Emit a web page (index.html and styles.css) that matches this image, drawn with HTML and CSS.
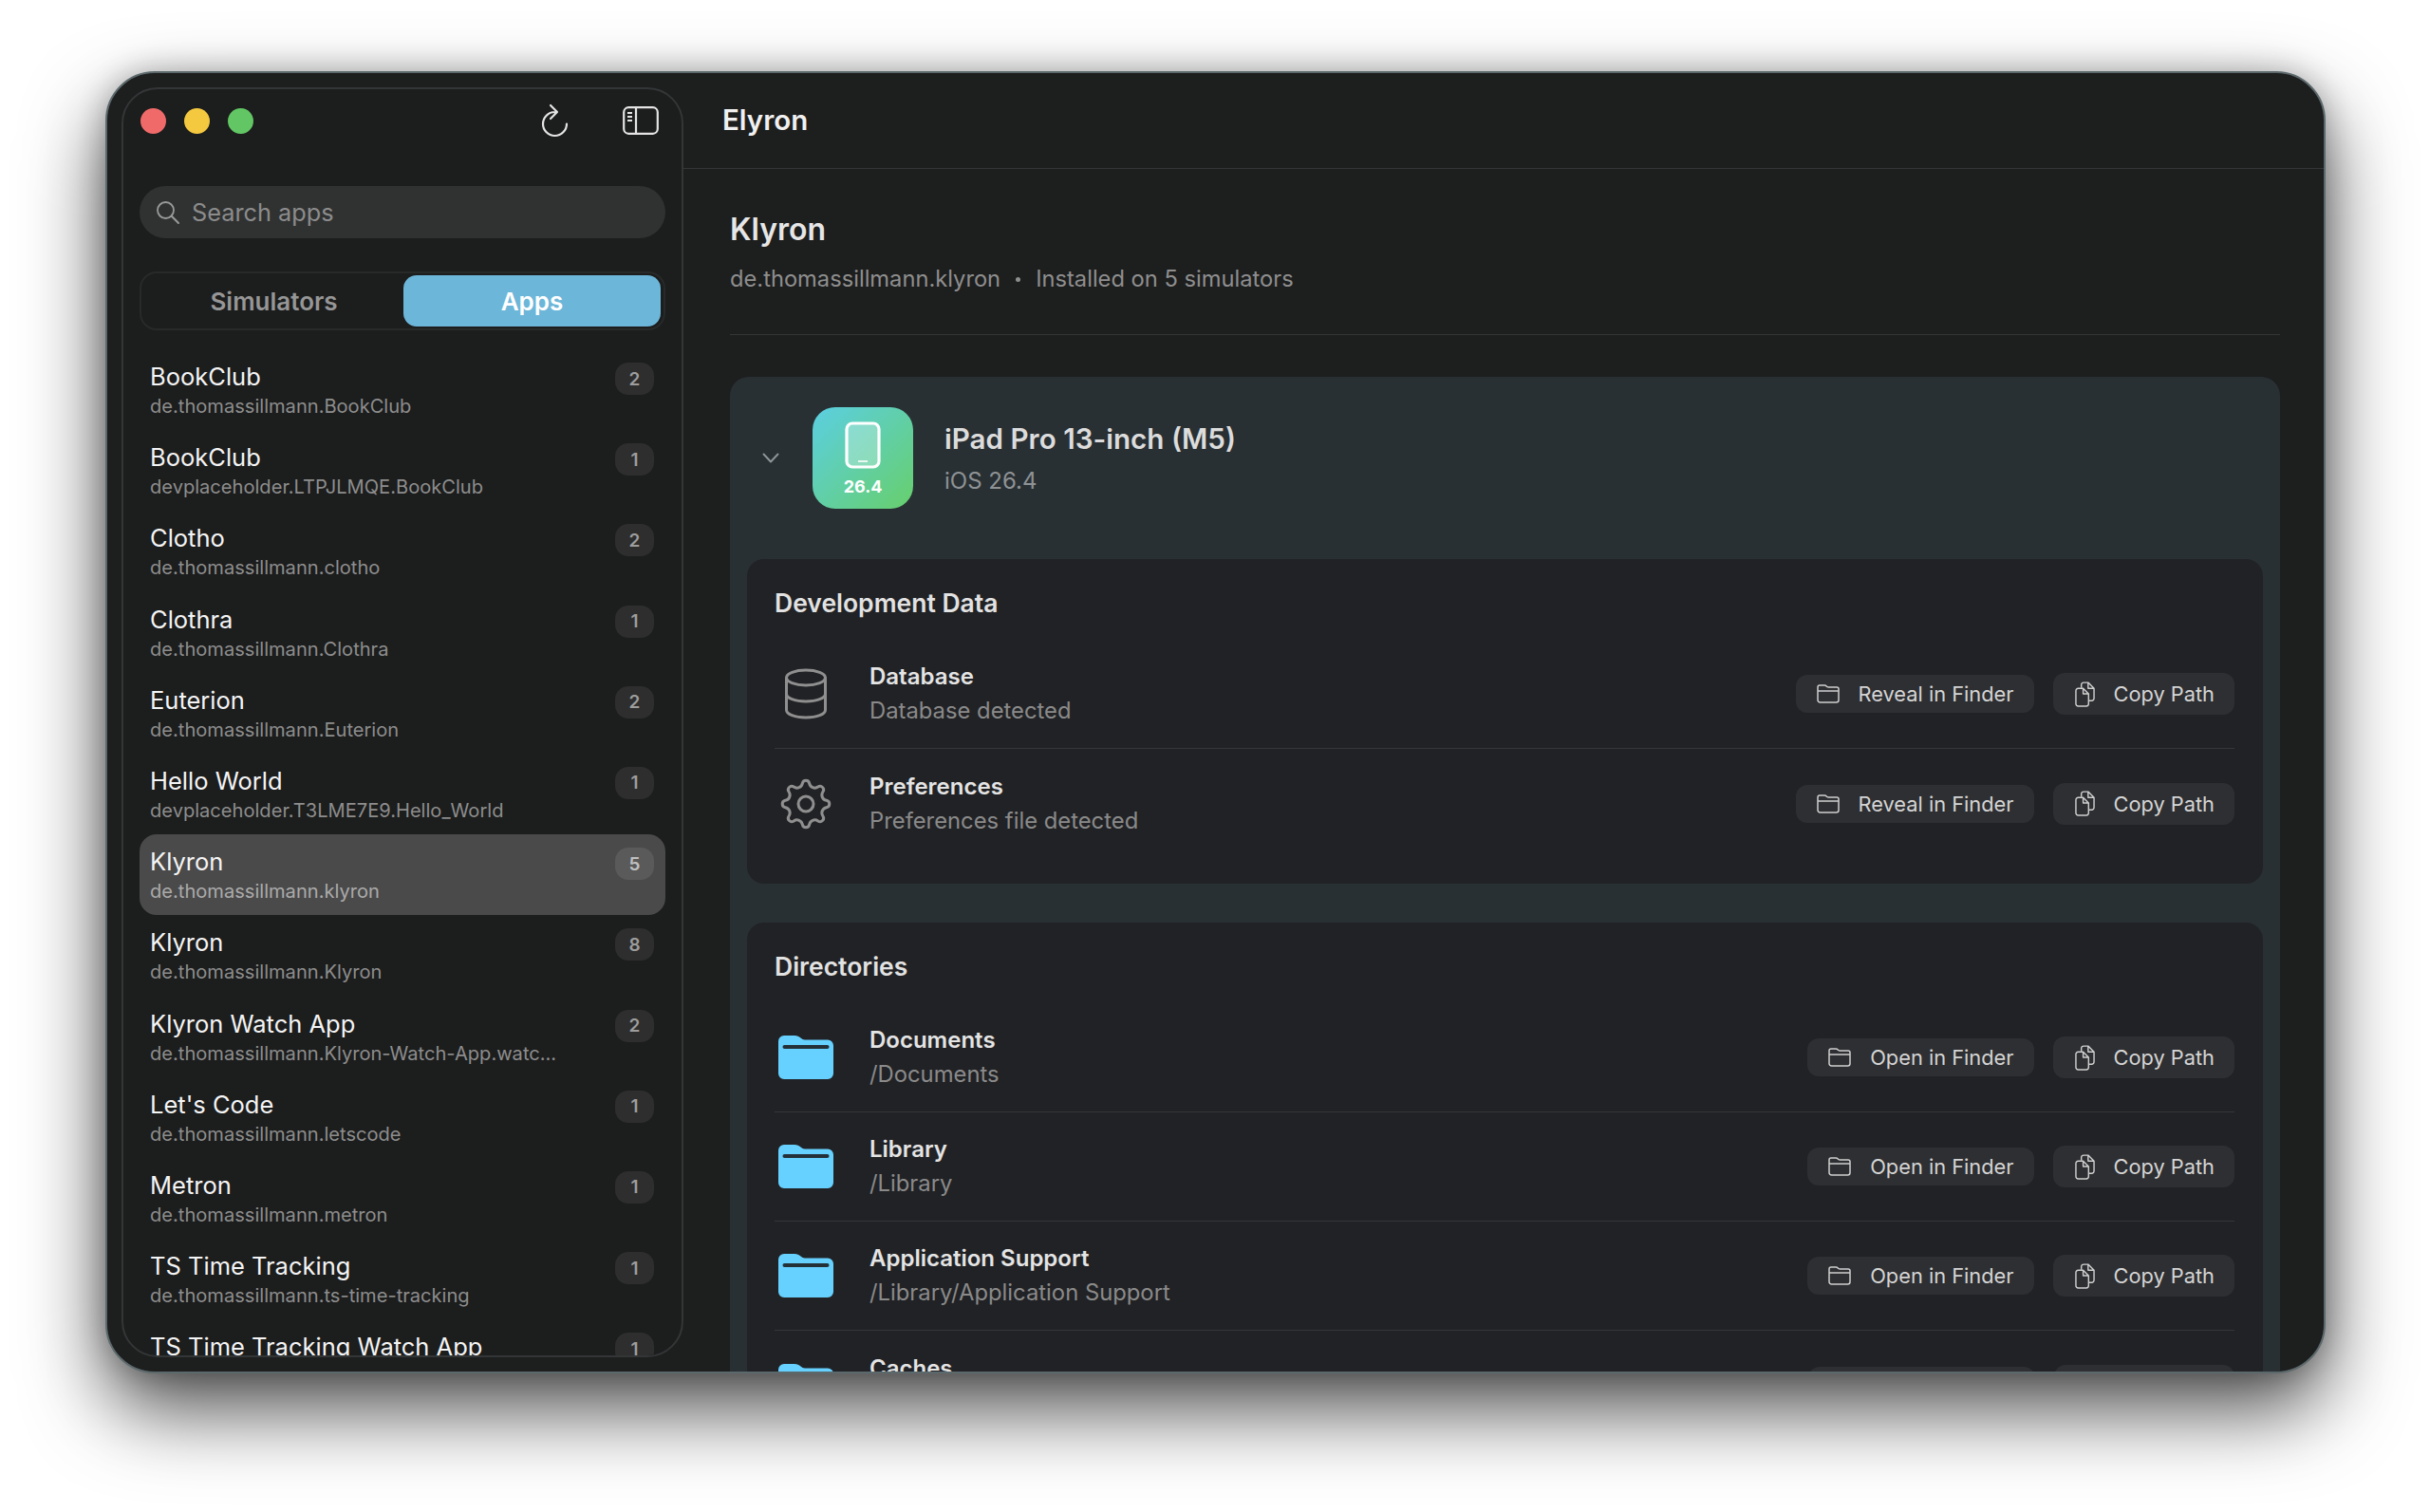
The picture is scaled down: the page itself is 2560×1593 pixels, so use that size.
FILE: index.html
```html
<!DOCTYPE html>
<html lang="en">
<head>
<meta charset="utf-8">
<title>Elyron</title>
<link rel="stylesheet" href="styles.css">
</head>
<body>
<svg class="defs" width="0" height="0" aria-hidden="true">
  <symbol id="i-folder-line" viewBox="0 0 24 20"><path d="M1 5V3a2 2 0 0 1 2-2h5c1.2 0 1.8.5 2.5 1.2.5.5 1 .8 2 .8H21a2 2 0 0 1 2 2v11.5a2.5 2.5 0 0 1-2.5 2.5h-17A2.5 2.5 0 0 1 1 16.500V5zM1 7h22" fill="none" stroke="currentColor" stroke-width="1.500"/></symbol>
  <symbol id="i-copy" viewBox="0 0 22 28"><path d="M7 7V3.500A2.500 2.500 0 0 1 9.500 1h5L21 7.500v11a2.500 2.500 0 0 1-2.500 2.500H15M14.500 1v6.500H21" fill="none" stroke="currentColor" stroke-width="1.500" stroke-linejoin="round"/><path d="M1 10a2.500 2.500 0 0 1 2.500-2.500H9l6 6v11A2.500 2.500 0 0 1 12.500 27h-9A2.500 2.500 0 0 1 1 24.500V10zM9 7.500v6h6" fill="none" stroke="currentColor" stroke-width="1.500" stroke-linejoin="round"/></symbol>
  <symbol id="i-folder" viewBox="0 0 58 46"><path d="M0 6a6 6 0 0 1 6-6h11c3 0 4.500 1 6.500 2.500C25 3.700 26 4.500 28 4.500h24a6 6 0 0 1 6 6V40a6 6 0 0 1-6 6H6a6 6 0 0 1-6-6V6z" fill="#66d0fe"/><rect x="4.500" y="10" width="49" height="4" rx="2" fill="#243038"/></symbol>
</svg>

<div class="window">
  <aside class="sidebar">
    <div class="topbar">
      <span class="light red"></span>
      <span class="light yellow"></span>
      <span class="light green"></span>
      <svg class="refresh" width="32" height="36" viewBox="0 0 32 36"><path d="M28 21.500A12.500 12.500 0 1 1 15.500 9H17M11 2l7 7-7 7" fill="none" stroke="#e4e4e4" stroke-width="2.200" stroke-linecap="round" stroke-linejoin="round"/></svg>
      <svg class="toggle" width="38" height="30" viewBox="0 0 38 30"><rect x="1.200" y="1.200" width="35.600" height="27.600" rx="5" fill="none" stroke="#e4e4e4" stroke-width="2.200"/><path d="M14 1v28" stroke="#e4e4e4" stroke-width="2.200"/><path d="M5 7h5M5 11h5M5 15h5" stroke="#e4e4e4" stroke-width="1.800"/></svg>
    </div>
    <div class="search">
      <svg width="26" height="26" viewBox="0 0 26 26"><circle cx="10.500" cy="10.500" r="8.500" fill="none" stroke="#9a9a9a" stroke-width="1.800"/><path d="M16.800 16.800 24 24" stroke="#9a9a9a" stroke-width="2" stroke-linecap="round"/></svg>
      <span>Search apps</span>
    </div>
    <div class="segmented">
      <span class="seg">Simulators</span>
      <span class="seg seg-on">Apps</span>
    </div>
    <ul class="applist">
      <li class="app"><div class="app-text"><div class="app-name">BookClub</div><div class="app-id">de.thomassillmann.BookClub</div></div><span class="badge">2</span></li>
      <li class="app"><div class="app-text"><div class="app-name">BookClub</div><div class="app-id">devplaceholder.LTPJLMQE.BookClub</div></div><span class="badge">1</span></li>
      <li class="app"><div class="app-text"><div class="app-name">Clotho</div><div class="app-id">de.thomassillmann.clotho</div></div><span class="badge">2</span></li>
      <li class="app"><div class="app-text"><div class="app-name">Clothra</div><div class="app-id">de.thomassillmann.Clothra</div></div><span class="badge">1</span></li>
      <li class="app"><div class="app-text"><div class="app-name">Euterion</div><div class="app-id">de.thomassillmann.Euterion</div></div><span class="badge">2</span></li>
      <li class="app"><div class="app-text"><div class="app-name">Hello World</div><div class="app-id">devplaceholder.T3LME7E9.Hello_World</div></div><span class="badge">1</span></li>
      <li class="app app-on"><div class="app-text"><div class="app-name">Klyron</div><div class="app-id">de.thomassillmann.klyron</div></div><span class="badge">5</span></li>
      <li class="app"><div class="app-text"><div class="app-name">Klyron</div><div class="app-id">de.thomassillmann.Klyron</div></div><span class="badge">8</span></li>
      <li class="app"><div class="app-text"><div class="app-name">Klyron Watch App</div><div class="app-id">de.thomassillmann.Klyron-Watch-App.watc...</div></div><span class="badge">2</span></li>
      <li class="app"><div class="app-text"><div class="app-name">Let's Code</div><div class="app-id">de.thomassillmann.letscode</div></div><span class="badge">1</span></li>
      <li class="app"><div class="app-text"><div class="app-name">Metron</div><div class="app-id">de.thomassillmann.metron</div></div><span class="badge">1</span></li>
      <li class="app"><div class="app-text"><div class="app-name">TS Time Tracking</div><div class="app-id">de.thomassillmann.ts-time-tracking</div></div><span class="badge">1</span></li>
      <li class="app"><div class="app-text"><div class="app-name">TS Time Tracking Watch App</div></div><span class="badge">1</span></li>
    </ul>
  </aside>

  <main class="main">
    <header class="titlebar">Elyron</header>
    <div class="content">
      <h1 class="heading">Klyron</h1>
      <p class="meta"><span>de.thomassillmann.klyron</span><span class="dot"></span><span>Installed on 5 simulators</span></p>
      <hr class="rule">
      <section class="device">
        <div class="device-head">
          <svg class="chevron" width="18" height="11" viewBox="0 0 18 11"><path d="M1.500 1.500 9 9.500l7.500-8" fill="none" stroke="#8f9598" stroke-width="1.900" stroke-linecap="round" stroke-linejoin="round"/></svg>
          <div class="device-icon">
            <svg width="38" height="50" viewBox="0 0 38 50"><rect x="2" y="2" width="34" height="46" rx="6" fill="#fff" fill-opacity=".28" stroke="#fff" stroke-width="3.200"/><path d="M14 42h10" stroke="#fff" stroke-width="1.600"/></svg>
            <span class="device-ver">26.4</span>
          </div>
          <div class="device-text">
            <div class="device-name">iPad Pro 13-inch (M5)</div>
            <div class="device-os">iOS 26.4</div>
          </div>
        </div>

        <div class="panel panel-dev">
          <h2 class="panel-title">Development Data</h2>
          <div class="row">
            <div class="row-icon">
              <svg width="46" height="54" viewBox="0 0 46 54"><g fill="none" stroke="#8f8f8f" stroke-width="3"><ellipse cx="23" cy="10" rx="20.500" ry="8"/><path d="M2.500 10v34c0 4.500 9 8 20.500 8s20.500-3.500 20.500-8V10"/><path d="M2.500 27c0 4.500 9 8 20.500 8s20.500-3.500 20.500-8"/></g></svg>
            </div>
            <div class="row-text"><div class="row-name">Database</div><div class="row-sub">Database detected</div></div>
            <div class="actions">
              <span class="btn"><svg class="ic-f"><use href="#i-folder-line"/></svg>Reveal in Finder</span>
              <span class="btn btn-copy"><svg class="ic-c"><use href="#i-copy"/></svg>Copy Path</span>
            </div>
          </div>
          <div class="row">
            <div class="row-icon">
              <svg width="54" height="54" viewBox="-27 -27 54 54"><path fill="none" stroke="#8f8f8f" stroke-width="3" d="M-3.660-21.660Q-3.050-24.810 0-24.810Q3.050-24.810 3.660-21.660Q4.270-18.510 7.170-17.310Q10.070-16.110 12.730-17.900Q15.390-19.700 17.550-17.550Q19.700-15.390 17.900-12.730Q16.110-10.070 17.310-7.170Q18.510-4.270 21.660-3.660Q24.810-3.050 24.810 0Q24.810 3.050 21.660 3.660Q18.510 4.270 17.310 7.170Q16.110 10.070 17.900 12.730Q19.700 15.390 17.550 17.550Q15.390 19.700 12.730 17.900Q10.070 16.110 7.170 17.310Q4.270 18.510 3.660 21.660Q3.050 24.810 0 24.810Q-3.050 24.810-3.660 21.660Q-4.270 18.510-7.170 17.310Q-10.070 16.110-12.730 17.900Q-15.390 19.700-17.550 17.550Q-19.700 15.390-17.900 12.730Q-16.110 10.070-17.310 7.170Q-18.510 4.270-21.660 3.660Q-24.810 3.050-24.810 0Q-24.810-3.050-21.660-3.660Q-18.510-4.270-17.310-7.170Q-16.110-10.070-17.900-12.730Q-19.700-15.390-17.550-17.550Q-15.390-19.700-12.730-17.900Q-10.070-16.110-7.170-17.310Q-4.270-18.510-3.660-21.660Z"/><circle r="8" fill="none" stroke="#8f8f8f" stroke-width="3"/></svg>
            </div>
            <div class="row-text"><div class="row-name">Preferences</div><div class="row-sub">Preferences file detected</div></div>
            <div class="actions">
              <span class="btn"><svg class="ic-f"><use href="#i-folder-line"/></svg>Reveal in Finder</span>
              <span class="btn btn-copy"><svg class="ic-c"><use href="#i-copy"/></svg>Copy Path</span>
            </div>
          </div>
        </div>

        <div class="panel">
          <h2 class="panel-title">Directories</h2>
          <div class="row">
            <div class="row-icon"><svg class="ic-big"><use href="#i-folder"/></svg></div>
            <div class="row-text"><div class="row-name">Documents</div><div class="row-sub">/Documents</div></div>
            <div class="actions">
              <span class="btn"><svg class="ic-f"><use href="#i-folder-line"/></svg>Open in Finder</span>
              <span class="btn btn-copy"><svg class="ic-c"><use href="#i-copy"/></svg>Copy Path</span>
            </div>
          </div>
          <div class="row">
            <div class="row-icon"><svg class="ic-big"><use href="#i-folder"/></svg></div>
            <div class="row-text"><div class="row-name">Library</div><div class="row-sub">/Library</div></div>
            <div class="actions">
              <span class="btn"><svg class="ic-f"><use href="#i-folder-line"/></svg>Open in Finder</span>
              <span class="btn btn-copy"><svg class="ic-c"><use href="#i-copy"/></svg>Copy Path</span>
            </div>
          </div>
          <div class="row">
            <div class="row-icon"><svg class="ic-big"><use href="#i-folder"/></svg></div>
            <div class="row-text"><div class="row-name">Application Support</div><div class="row-sub">/Library/Application Support</div></div>
            <div class="actions">
              <span class="btn"><svg class="ic-f"><use href="#i-folder-line"/></svg>Open in Finder</span>
              <span class="btn btn-copy"><svg class="ic-c"><use href="#i-copy"/></svg>Copy Path</span>
            </div>
          </div>
          <div class="row">
            <div class="row-icon"><svg class="ic-big"><use href="#i-folder"/></svg></div>
            <div class="row-text"><div class="row-name">Caches</div><div class="row-sub">&nbsp;</div></div>
            <div class="actions">
              <span class="btn btn-open"><svg class="ic-f"><use href="#i-folder-line"/></svg></span>
              <span class="btn btn-copy"><svg class="ic-c"><use href="#i-copy"/></svg></span>
            </div>
          </div>
        </div>
      </section>
    </div>
  </main>
</div>
</body>
</html>
```

FILE: styles.css
```css
* { box-sizing: border-box; }
html, body { margin: 0; padding: 0; height: 100%; }
body {
  background: #fff;
  font-family: "Inter", "Liberation Sans", sans-serif;
  overflow: hidden;
}
.defs { position: absolute; }

.window {
  width: 2339px;
  height: 1372px;
  margin: 75px 0 0 111px;
  display: flex;
  background: #1d1e1e;
  border: 2px solid #5c696c;
  border-radius: 52px;
  overflow: hidden;
  box-shadow: 0 38px 84px rgba(0, 0, 0, .7), 0 0 30px rgba(0, 0, 0, .24);
}

/* sidebar */
.sidebar {
  flex: none;
  width: 592px;
  margin: 15px 0 15px 15px;
  padding: 0 17px;
  background: #1c1d1d;
  border: 2px solid #333637;
  border-radius: 38px;
  overflow: hidden;
  display: flex;
  flex-direction: column;
}
.topbar {
  flex: none;
  height: 66px;
  display: flex;
  align-items: center;
}
.light { width: 27px; height: 27px; border-radius: 50%; margin-right: 19px; margin-left: 0; }
.red { background: #f16a6a; margin-left: 1px; }
.yellow { background: #f4c83f; }
.green { background: #61c663; }
.refresh { margin-left: auto; margin-right: 55px; }
.toggle { margin-right: 7px; }

.search {
  flex: none;
  height: 55px;
  margin-top: 36px;
  padding-left: 17px;
  display: flex;
  align-items: center;
  gap: 12px;
  border-radius: 28px;
  background: #303232;
  color: #8c8c8c;
  font-size: 25.300px;
}
.search svg { flex: none; }

.segmented {
  flex: none;
  height: 62px;
  margin-top: 35px;
  padding: 2px 3px;
  display: grid;
  grid-template-columns: 1fr 271px;
  border: 2px solid #282a2a;
  border-radius: 18px;
}
.seg {
  display: flex;
  align-items: center;
  justify-content: center;
  border-radius: 14px;
  color: #969696;
  font-size: 26px;
  font-weight: 600;
}
.seg-on { background: #6cb6d9; color: #fff; }

.applist {
  list-style: none;
  margin: 20px 0 0;
  padding: 0;
}
.app {
  height: 85.200px;
  padding: 12px 12px 0 11px;
  display: flex;
  justify-content: space-between;
  border-radius: 18px;
}
.app-on { background: #4a4a4a; }
.app-name { color: #f4f4f4; font-size: 25.500px; line-height: 33px; white-space: nowrap; }
.app-id { color: #8d8d8d; font-size: 20.100px; line-height: 31px; white-space: nowrap; }
.app-on .app-id { color: #aaa; }
.badge {
  flex: none;
  width: 41px;
  height: 34px;
  margin-top: 2px;
  display: flex;
  align-items: center;
  justify-content: center;
  border-radius: 14px;
  background: #2e2e2e;
  color: #9d9d9d;
  font-size: 19px;
  font-weight: 600;
}
.app-on .badge { background: #5a5a5a; color: #c0c0c0; }

/* main */
.main {
  flex: 1;
  min-width: 0;
  display: flex;
  flex-direction: column;
  overflow: hidden;
}
.titlebar {
  flex: none;
  height: 101px;
  padding: 0 0 2px 41px;
  display: flex;
  align-items: center;
  border-bottom: 1px solid #333536;
  color: #f0f0f0;
  font-size: 29.500px;
  font-weight: 600;
}
.content { flex: 1; min-height: 0; padding: 44px 46px 0 49px; }
.heading {
  margin: 0;
  color: #e6e6e6;
  font-size: 32px;
  font-weight: 600;
  line-height: 40px;
}
.meta {
  margin: 17px 0 0;
  display: flex;
  align-items: center;
  gap: 16px;
  color: #8e8e8e;
  font-size: 23.700px;
  line-height: 30px;
}
.dot { width: 5px; height: 5px; border-radius: 50%; background: #8e8e8e; }
.rule { height: 1px; margin: 43px 0 44px; border: 0; background: #333536; }

.device {
  padding: 0 18px;
  border-radius: 20px;
  background: #293034;
}
.device-head {
  height: 192px;
  padding: 32px 0 0 16px;
  display: flex;
  align-items: flex-start;
}
.chevron { flex: none; margin-top: 48px; }
.device-icon {
  flex: none;
  width: 106px;
  height: 107px;
  margin-left: 35px;
  padding-top: 15px;
  display: flex;
  flex-direction: column;
  align-items: center;
  border-radius: 24px;
  background: linear-gradient(135deg, #5bcfe2, #67cf6c);
}
.device-ver { color: #fff; font-size: 18px; font-weight: 700; line-height: 24px; margin-top: 7px; }
.device-text { margin-left: 33px; padding-top: 15px; }
.device-name { color: #dcdcdc; font-size: 29.600px; font-weight: 600; line-height: 36px; }
.device-os { margin-top: 9px; color: #8e9294; font-size: 24px; line-height: 36px; }

.panel {
  margin-bottom: 41px;
  padding: 30px 30px 27px 29px;
  border-radius: 18px;
  background: #212225;
}
.panel-title {
  margin: 0 0 23px;
  color: #e2e2e2;
  font-size: 26.500px;
  font-weight: 600;
  line-height: 32px;
}
.row {
  height: 115px;
  display: flex;
  align-items: center;
  border-bottom: 1px solid #343638;
}
.row:last-child { border-bottom: 0; }
.row-icon {
  flex: none;
  width: 66px;
  margin-right: 34px;
  display: flex;
  justify-content: center;
}
.ic-big { width: 58px; height: 46px; }
.row-name { color: #e4e4e4; font-size: 24px; font-weight: 600; line-height: 36px; }
.row-sub { color: #8a8a8a; font-size: 23.800px; line-height: 36px; }
.actions {
  margin-left: auto;
  display: flex;
  align-items: center;
  gap: 20px;
}
.btn {
  height: 40px;
  padding: 0 21px 0 22px;
  display: flex;
  align-items: center;
  gap: 20px;
  border-radius: 12px;
  background: #2e2f32;
  color: #d4d4d4;
  font-size: 21.800px;
  white-space: nowrap;
}
.btn-copy { height: 44px; padding-left: 23px; min-width: 190px; }
.btn-open { width: 239px; }
.ic-f { width: 24px; height: 20px; color: #cfcfcf; }
.ic-c { width: 21px; height: 27px; color: #cfcfcf; }
```
